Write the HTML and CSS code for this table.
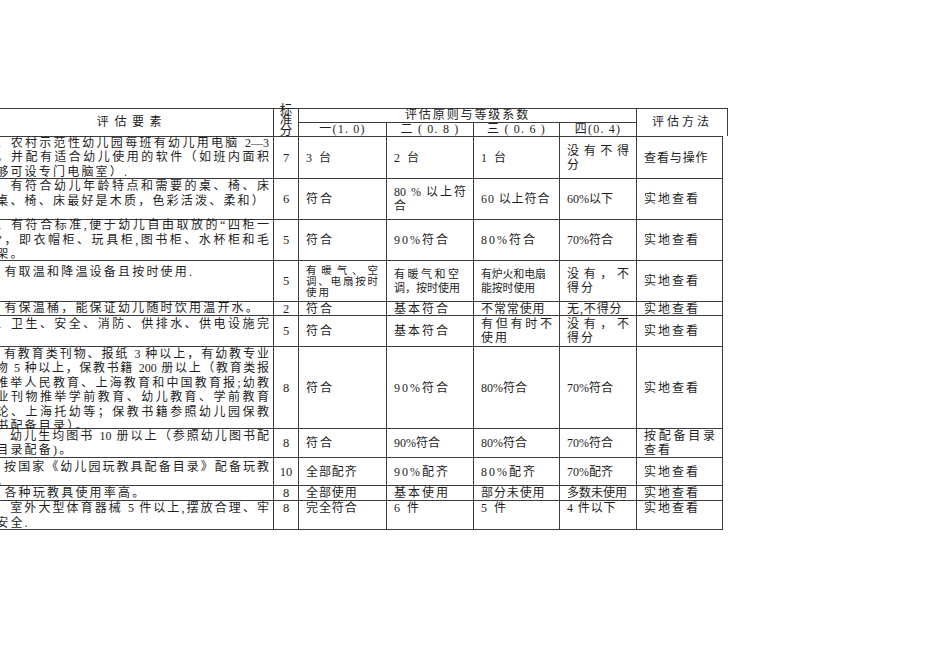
FILE: index.html
```html
<!DOCTYPE html>
<html lang="zh-CN">
<head>
<meta charset="utf-8">
<title>评估表</title>
<link rel="stylesheet" href="styles.css">
</head>
<body>
<div class="page">
  <div class="sheet">
    <div class="head">
      <div class="hc h-item">评估要素</div>
      <div class="hc h-score">标<br>准<br>分</div>
      <div class="hc h-grade">评估原则与等级系数</div>
      <div class="hc h-g">一(1. 0)</div>
      <div class="hc h-g">二 ( 0. 8 )</div>
      <div class="hc h-g">三 ( 0. 6 )</div>
      <div class="hc h-g">四(0. 4)</div>
      <div class="hc h-method">评估方法</div>
    </div>
    <div class="body">
      <!-- row 1 -->
      <div class="c item"><div class="t">
        <span class="j">10、农村示范性幼儿园每班有幼儿用电脑 2—3</span>
        <span class="j">台，并配有适合幼儿使用的软件（如班内面积</span>
        <span class="l">不够可设专门电脑室）.</span>
      </div></div>
      <div class="c s">7</div>
      <div class="c">3 台</div>
      <div class="c">2 台</div>
      <div class="c">1 台</div>
      <div class="c"><div class="t"><span class="j">没有不得</span><span class="l">分</span></div></div>
      <div class="c mid">查看与操作</div>

      <!-- row 2 -->
      <div class="c item up"><div class="t">
        <span class="j">11、有符合幼儿年龄特点和需要的桌、椅、床</span>
        <span class="l">（桌、椅、床最好是木质，色彩活泼、柔和）</span>
      </div></div>
      <div class="c s">6</div>
      <div class="c">符合</div>
      <div class="c"><div class="t"><span class="j">80 % 以上符</span><span class="l">合</span></div></div>
      <div class="c mid">60 以上符合</div>
      <div class="c tight">60%以下</div>
      <div class="c">实地查看</div>

      <!-- row 3 -->
      <div class="c item"><div class="t">
        <span class="j">12、有符合标准,便于幼儿自由取放的“四柜一</span>
        <span class="j">柜”，即衣帽柜、玩具柜,图书柜、水杯柜和毛</span>
        <span class="l">巾架。</span>
      </div></div>
      <div class="c s">5</div>
      <div class="c">符合</div>
      <div class="c">90%符合</div>
      <div class="c">80%符合</div>
      <div class="c tight">70%符合</div>
      <div class="c">实地查看</div>

      <!-- row 4 -->
      <div class="c item up2"><div class="t">
        <span class="l">7、有取温和降温设备且按时使用.</span>
      </div></div>
      <div class="c s">5</div>
      <div class="c sm1"><div class="t"><span class="j">有暖气、空</span><span class="j">调、电扇按时</span><span class="l">使用</span></div></div>
      <div class="c sm2"><div class="t"><span class="j">有暖气和空</span><span class="j">调，按时使用</span></div></div>
      <div class="c sm3"><div class="t"><span class="l">有炉火和电扇</span><span class="l">能按时使用</span></div></div>
      <div class="c"><div class="t"><span class="j">没有，不</span><span class="l">得分</span></div></div>
      <div class="c">实地查看</div>

      <!-- row 5 -->
      <div class="c item"><div class="t">
        <span class="l">8、有保温桶，能保证幼儿随时饮用温开水。</span>
      </div></div>
      <div class="c s">2</div>
      <div class="c">符合</div>
      <div class="c">基本符合</div>
      <div class="c mid">不常常使用</div>
      <div class="c mid">无,不得分</div>
      <div class="c">实地查看</div>

      <!-- row 6 -->
      <div class="c item"><div class="t">
        <span class="j">13、卫生、安全、消防、供排水、供电设施完</span>
        <span class="l">善</span>
      </div></div>
      <div class="c s">5</div>
      <div class="c">符合</div>
      <div class="c">基本符合</div>
      <div class="c"><div class="t"><span class="j">有但有时不</span><span class="l">使用</span></div></div>
      <div class="c"><div class="t"><span class="j">没有，不</span><span class="l">得分</span></div></div>
      <div class="c">实地查看</div>

      <!-- row 7 -->
      <div class="c item dn"><div class="t">
        <span class="j">9、有教育类刊物、报纸 3 种以上，有幼教专业</span>
        <span class="j">刊物 5 种以上，保教书籍 200 册以上（教育类报</span>
        <span class="j">纸推举人民教育、上海教育和中国教育报;幼教</span>
        <span class="j">专业刊物推举学前教育、幼儿教育、学前教育</span>
        <span class="j">理论、上海托幼等；保教书籍参照幼儿园保教</span>
        <span class="l">用书配备目录）。</span>
      </div></div>
      <div class="c s">8</div>
      <div class="c">符合</div>
      <div class="c">90%符合</div>
      <div class="c tight">80%符合</div>
      <div class="c tight">70%符合</div>
      <div class="c">实地查看</div>

      <!-- row 8 -->
      <div class="c item"><div class="t">
        <span class="j">14、幼儿生均图书 10 册以上（参照幼儿图书配</span>
        <span class="l">备目录配备)。</span>
      </div></div>
      <div class="c s">8</div>
      <div class="c">符合</div>
      <div class="c tight">90%符合</div>
      <div class="c tight">80%符合</div>
      <div class="c tight">70%符合</div>
      <div class="c"><div class="t"><span class="j">按配备目录</span><span class="l">查看</span></div></div>

      <!-- row 9 -->
      <div class="c item dn2"><div class="t">
        <span class="j">5、按国家《幼儿园玩教具配备目录》配备玩教</span>
        <span class="l">具。</span>
      </div></div>
      <div class="c s">10</div>
      <div class="c mid">全部配齐</div>
      <div class="c">90%配齐</div>
      <div class="c">80%配齐</div>
      <div class="c tight">70%配齐</div>
      <div class="c">实地查看</div>

      <!-- row 10 -->
      <div class="c item"><div class="t">
        <span class="l">6、各种玩教具使用率高。</span>
      </div></div>
      <div class="c s">8</div>
      <div class="c mid">全部使用</div>
      <div class="c">基本使用</div>
      <div class="c mid">部分未使用</div>
      <div class="c tight">多数未使用</div>
      <div class="c">实地查看</div>

      <!-- row 11 -->
      <div class="c item top"><div class="t">
        <span class="j">15、室外大型体育器械 5 件以上,摆放合理、牢</span>
        <span class="l">固安全.</span>
      </div></div>
      <div class="c s top">8</div>
      <div class="c top mid">完全符合</div>
      <div class="c top">6 件</div>
      <div class="c top">5 件</div>
      <div class="c top mid">4 件以下</div>
      <div class="c top">实地查看</div>
    </div>
  </div>
</div>
</body>
</html>
```
FILE: styles.css
```css
html, body {
  margin: 0;
  padding: 0;
  background: #ffffff;
}

body {
  font-family: "Liberation Serif", "Noto Sans CJK SC", serif;
  font-size: 12px;
  color: #1e1e1e;
}

.page {
  width: 950px;
  height: 672px;
  overflow: hidden;
}

.sheet {
  margin: 108px 0 0 -22px;
  width: max-content;
}

.head,
.body {
  display: grid;
  gap: 1px;
  background: #3c3c3c;
  width: max-content;
}

.head {
  grid-template-columns: 294px 24px 87px 86px 85px 76px 90px;
  grid-template-rows: 13px 13px;
  padding: 1px 1px 0 1px;
}

.body {
  grid-template-columns: 294px 24px 87px 86px 85px 76px 85px;
  grid-template-rows: 41px 40px 40px 40px 13px 30px 81px 28px 27px 14px 28px;
  padding: 1px;
}

.hc {
  background: #ffffff;
  display: flex;
  align-items: center;
  justify-content: center;
  white-space: nowrap;
  letter-spacing: 3px;
  line-height: 13px;
}

.h-item {
  grid-column: 1;
  grid-row: 1 / 3;
  padding-left: 12px;
  letter-spacing: 5.6px;
}

.h-score {
  grid-column: 2;
  grid-row: 1 / 3;
  font-size: 12.5px;
  line-height: 10.5px;
  letter-spacing: 0;
  padding-bottom: 4px;
  text-align: center;
}

.h-grade {
  grid-column: 3 / 7;
  grid-row: 1;
  letter-spacing: 1.9px;
}

.h-g {
  grid-row: 2;
  letter-spacing: 1.2px;
}

.h-method {
  grid-column: 7;
  grid-row: 1 / 3;
}

.c {
  background: #ffffff;
  display: flex;
  align-items: center;
  padding: 0 7px;
  white-space: nowrap;
  letter-spacing: 2px;
  line-height: 14px;
  min-width: 0;
}

.t {
  width: 100%;
}

.j {
  display: block;
  text-align: justify;
  text-align-last: justify;
  letter-spacing: 0;
}

.l {
  display: block;
}

.item {
  padding: 0 4px 0 3px;
  line-height: 14.5px;
}

.item .l {
  letter-spacing: 2.2px;
}

.item.up {
  padding-bottom: 11px;
}

.item.up2 {
  padding-bottom: 18px;
}

.item.dn {
  padding-top: 5px;
}

.item.dn2 {
  padding-top: 5px;
}

.s {
  justify-content: center;
  letter-spacing: 0;
  font-size: 12.5px;
  padding: 0;
}

.mid {
  letter-spacing: 0.9px;
}

.tight {
  letter-spacing: 0;
}

.sm1 {
  font-size: 10.5px;
  line-height: 11px;
  padding-right: 8px;
}

.sm2 {
  font-size: 11px;
  line-height: 14px;
  padding-right: 14px;
}

.sm3 {
  font-size: 10.8px;
  line-height: 14px;
  letter-spacing: 0;
}

.sm3 .l {
  letter-spacing: 0;
}

.top {
  align-items: flex-start;
}
```
